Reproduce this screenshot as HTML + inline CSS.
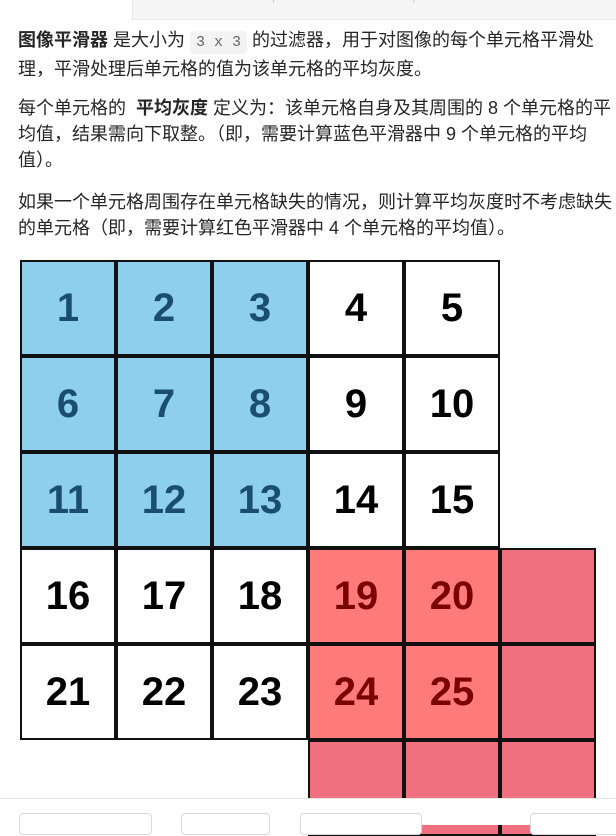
<!DOCTYPE html>
<html><head><meta charset="utf-8"><style>
body{margin:0;width:616px;height:824px;overflow:hidden;background:#fff;font-family:"Liberation Sans","Noto Sans CJK SC",sans-serif;color:#262626;position:relative}
.tab{position:absolute;top:0;left:132px;width:484px;height:19px;background:#f5f5f5;border-bottom:1px solid #e8e8e8;border-left:1px solid #e8e8e8}
.tab i{position:absolute;top:0;width:1px;height:3px;background:#ccc}
p{position:absolute;left:18px;width:600px;margin:0;font-size:18px;line-height:26px;white-space:nowrap}
code{font-family:"Liberation Mono",monospace;background:#f3f3f3;border-radius:4px;padding:3px 6px;color:#666;font-size:15px}
.c{position:absolute;width:96px;height:96px;box-sizing:border-box;border:2px solid #111;font:bold 40px/92px "Liberation Sans",sans-serif;text-align:center;color:#000}
.b{background:#8ecfee;color:#1a4d6e}
.r{background:#ff7b7b;color:#7a0000}
.rr{background:#f07080}
.foot{position:absolute;left:0;top:798px;width:616px;height:26px;border-top:1px solid #e8e8e8;background:#fff;z-index:5}
.btn{position:absolute;top:813px;height:20px;border:1px solid #d9d9d9;border-radius:4px;background:#fff;z-index:6}
</style></head><body>
<div class="tab"><i style="left:140px"></i><i style="left:280px"></i></div>
<p style="top:27px"><b>图像平滑器</b> 是大小为 <code>3 x 3</code> 的过滤器，用于对图像的每个单元格平滑处<br>理，平滑处理后单元格的值为该单元格的平均灰度。</p>
<p style="top:95px">每个单元格的 &nbsp;<b>平均灰度</b> 定义为：该单元格自身及其周围的 8 个单元格的平<br>均值，结果需向下取整。（即，需要计算蓝色平滑器中 9 个单元格的平均<br>值）。</p>
<p style="top:189px">如果一个单元格周围存在单元格缺失的情况，则计算平均灰度时不考虑缺失<br>的单元格（即，需要计算红色平滑器中 4 个单元格的平均值）。</p>
<div style="position:absolute;left:0;top:0">
<div class="c rr" style="left:500px;top:548px"></div>
<div class="c rr" style="left:500px;top:644px"></div>
<div class="c rr" style="left:500px;top:740px"></div>
<div class="c rr" style="left:308px;top:740px"></div>
<div class="c rr" style="left:404px;top:740px"></div>
<div class="c b" style="left:20px;top:260px">1</div><div class="c b" style="left:116px;top:260px">2</div><div class="c b" style="left:212px;top:260px">3</div><div class="c" style="left:308px;top:260px">4</div><div class="c" style="left:404px;top:260px">5</div>
<div class="c b" style="left:20px;top:356px">6</div><div class="c b" style="left:116px;top:356px">7</div><div class="c b" style="left:212px;top:356px">8</div><div class="c" style="left:308px;top:356px">9</div><div class="c" style="left:404px;top:356px">10</div>
<div class="c b" style="left:20px;top:452px">11</div><div class="c b" style="left:116px;top:452px">12</div><div class="c b" style="left:212px;top:452px">13</div><div class="c" style="left:308px;top:452px">14</div><div class="c" style="left:404px;top:452px">15</div>
<div class="c" style="left:20px;top:548px">16</div><div class="c" style="left:116px;top:548px">17</div><div class="c" style="left:212px;top:548px">18</div><div class="c r" style="left:308px;top:548px">19</div><div class="c r" style="left:404px;top:548px">20</div>
<div class="c" style="left:20px;top:644px">21</div><div class="c" style="left:116px;top:644px">22</div><div class="c" style="left:212px;top:644px">23</div><div class="c r" style="left:308px;top:644px">24</div><div class="c r" style="left:404px;top:644px">25</div>
</div>
<div class="foot"></div>
<div class="btn" style="left:19px;width:131px"></div>
<div class="btn" style="left:181px;width:87px"></div>
<div class="btn" style="left:300px;width:120px"></div>
<div class="btn" style="left:530px;width:100px"></div>
</body></html>
